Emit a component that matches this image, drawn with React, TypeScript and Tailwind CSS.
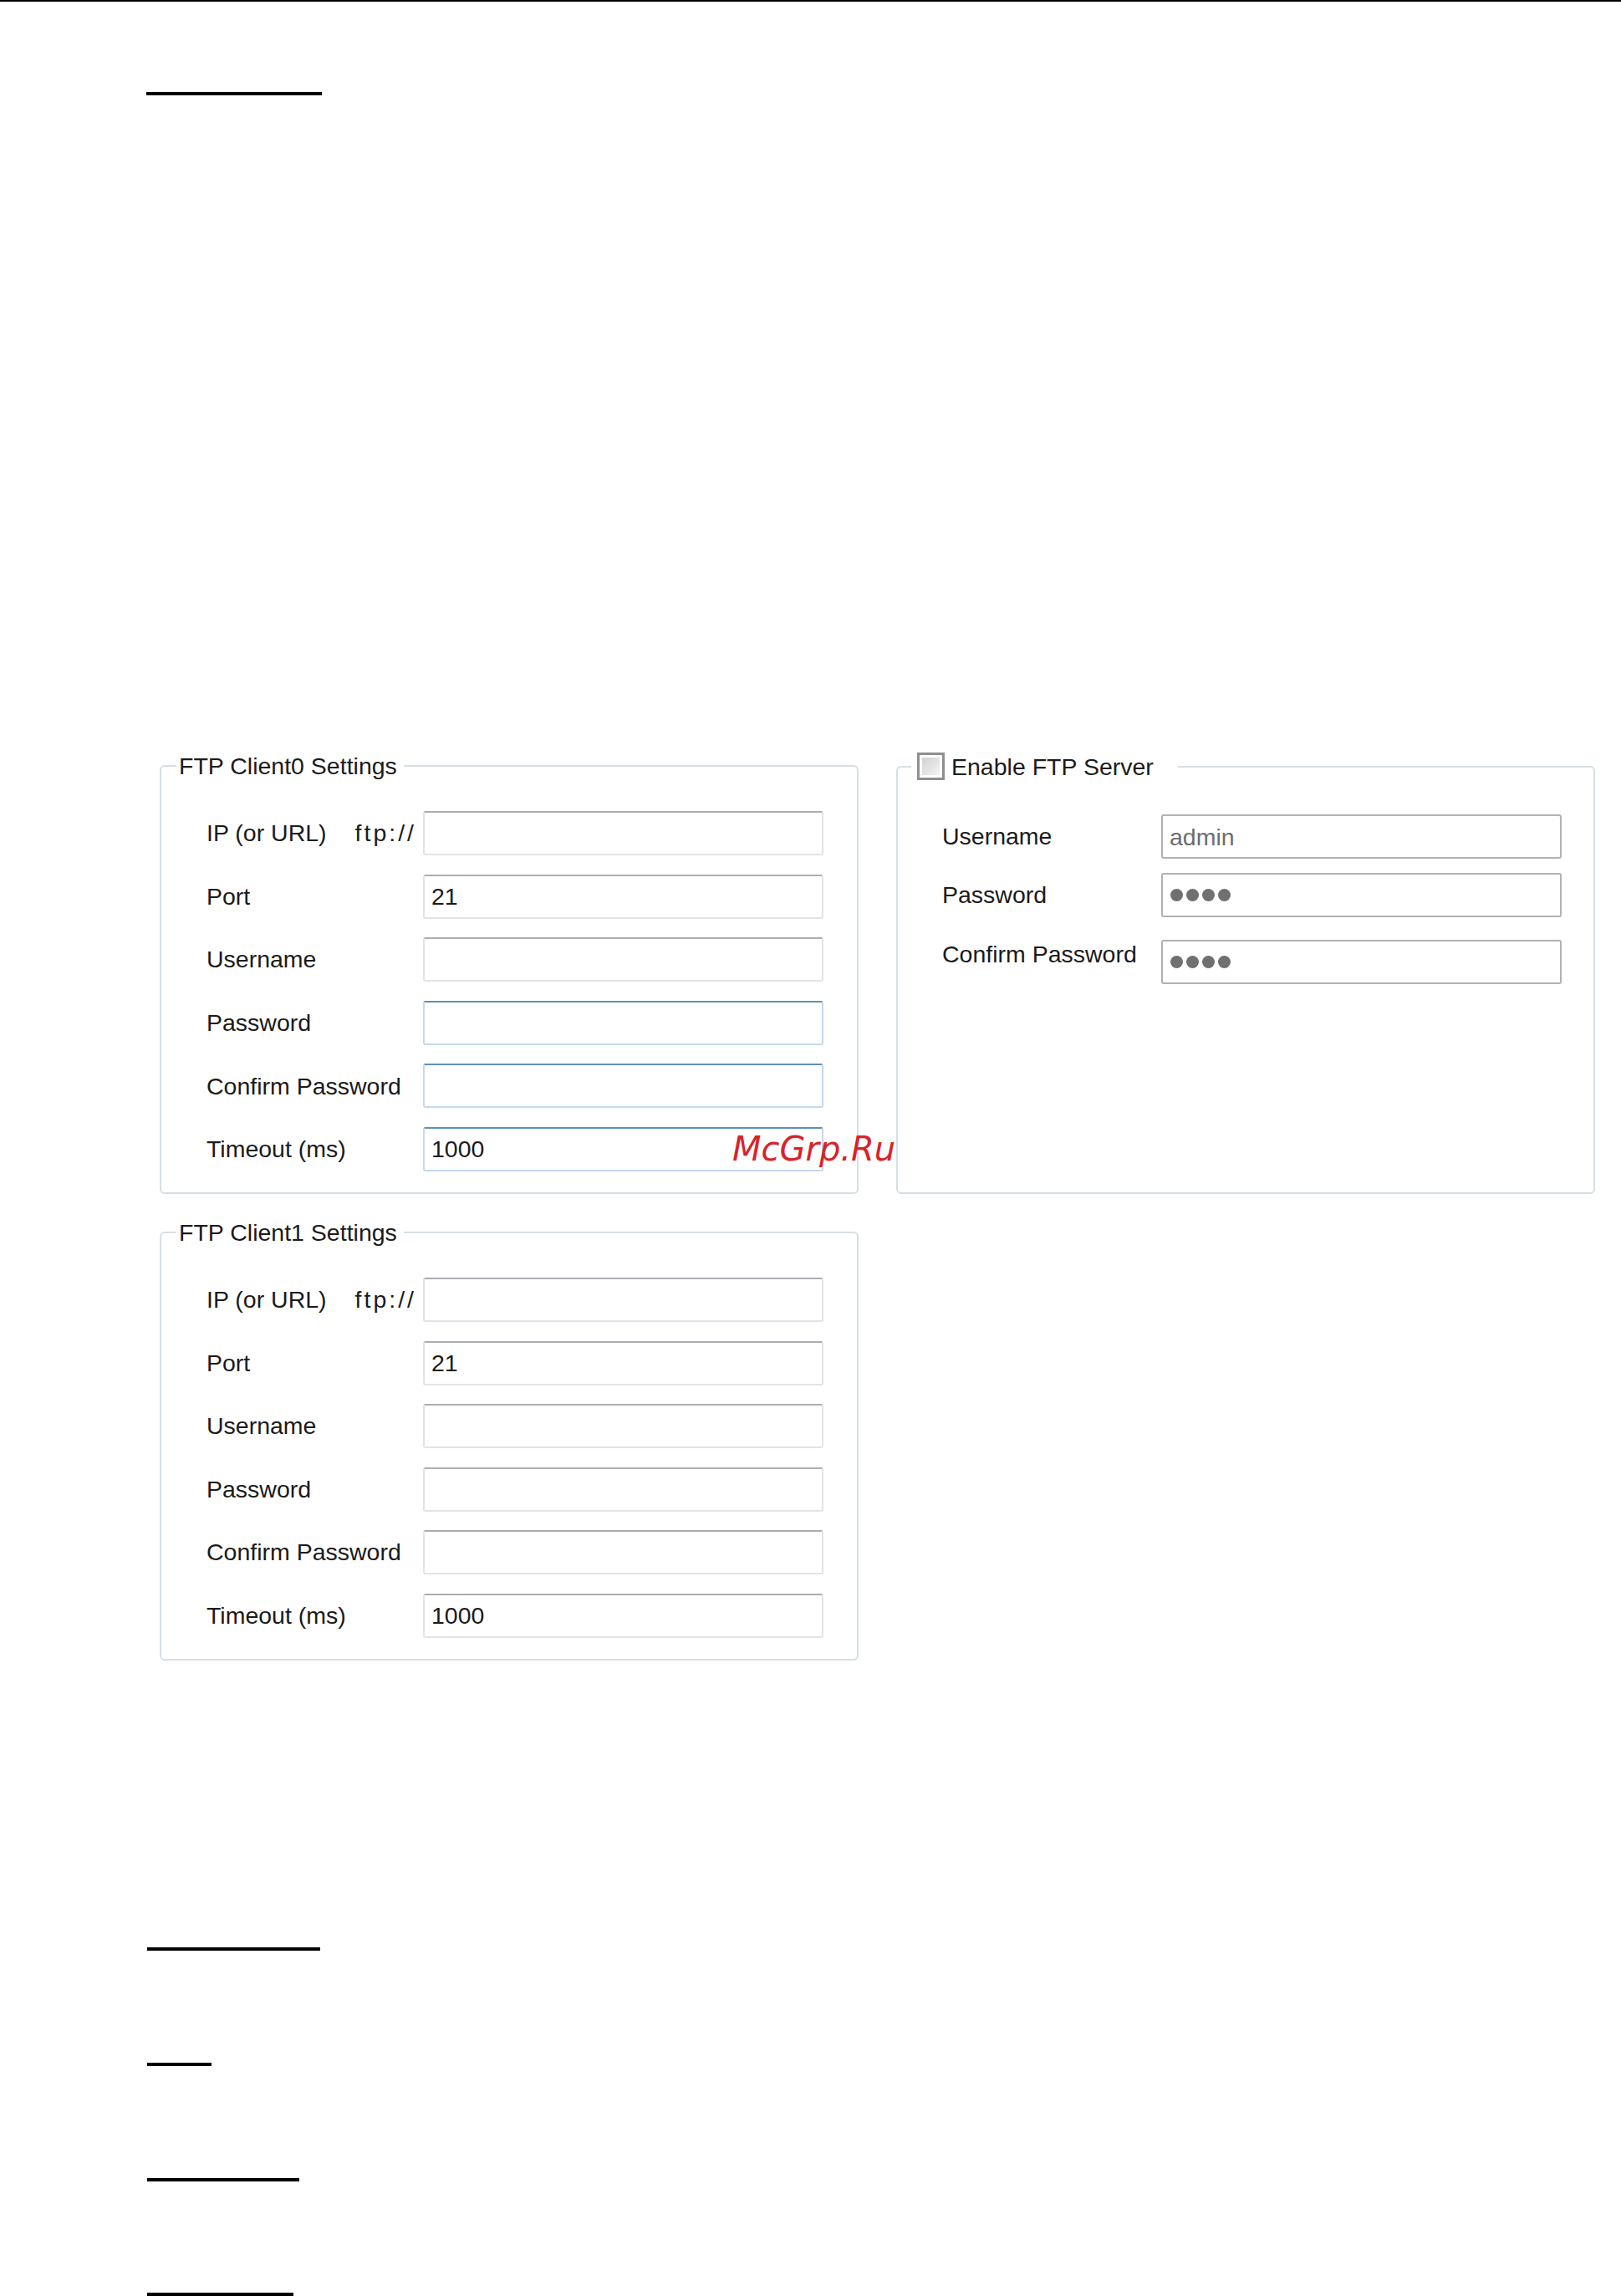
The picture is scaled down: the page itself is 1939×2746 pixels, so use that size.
const FONT = "font-['Liberation_Sans',Arial,sans-serif]";

type FieldKind = "normal" | "focus" | "disabled";

const BORDERS: Record<FieldKind, string> = {
  normal: "border-[#e2e3ea] border-t-[#abadb3]",
  focus: "border-[#c3d9ee] border-t-[#5b8fc0]",
  disabled: "border-[#b1b1b1]",
};

function Field({ value, kind = "normal", dots = 0 }: { value?: string; kind?: FieldKind; dots?: number }) {
  return (
    <div
      className={`flex h-[53px] w-[479px] items-center rounded-[3px] border-2 pl-[8px] text-[28.5px] leading-[32px] ${BORDERS[kind]} ${
        kind === "disabled" ? "text-[#6d6d6d]" : "text-[#1b1b1b]"
      }`}
    >
      {value}
      {dots > 0 && (
        <span className="flex gap-[4px] pl-[1px]">
          {Array.from({ length: dots }).map((_, i) => (
            <span key={i} className="h-[15px] w-[15px] rounded-full bg-[#707070]" />
          ))}
        </span>
      )}
    </div>
  );
}

const CLIENT_ROWS = [
  { label: "Port", value: "21" },
  { label: "Username" },
  { label: "Password" },
  { label: "Confirm Password" },
  { label: "Timeout (ms)", value: "1000" },
];

function ClientBox({ title, focused }: { title: string; focused: boolean }) {
  return (
    <fieldset className="rounded-[6px] border-2 border-[#d5dfe5] pt-[38px] pb-[25px]">
      <legend className="ml-[18px] pl-[3px] pr-[8px] text-[28.5px] leading-[32px] text-[#1b1b1b]">{title}</legend>
      <div className="grid grid-cols-[259px_479px] gap-y-[22.6px] pl-[54px] text-[28.5px] text-[#1b1b1b]">
        <div className="flex items-center justify-between pr-[8px]">
          <span>IP (or URL)</span>
          <span className="tracking-[3px]">ftp://</span>
        </div>
        <Field />
        {CLIENT_ROWS.map((row, i) => (
          <div key={row.label} className="contents">
            <div className="flex items-center">{row.label}</div>
            <Field value={row.value} kind={focused && i >= 2 ? "focus" : "normal"} />
          </div>
        ))}
      </div>
    </fieldset>
  );
}

function ServerBox() {
  return (
    <fieldset className="rounded-[6px] border-2 border-[#d5dfe5] pt-[41px] pb-[25px]">
      <legend className="ml-[16px] flex items-center gap-[8px] pl-[7px] pr-[29px] text-[28.5px] leading-[32px] text-[#1b1b1b]">
        <span className="flex h-[33px] w-[33px] items-center justify-center border-[3px] border-[#8f8f8f]">
          <span className="h-[25px] w-[25px] border-2 border-white bg-gradient-to-br from-[#d2d2d2] to-[#f3f3f3]" />
        </span>
        Enable FTP Server
      </legend>
      <div className="flex flex-col pl-[53px] text-[28.5px] text-[#1b1b1b]">
        <div className="flex h-[53px] items-center">
          <span className="w-[262px]">Username</span>
          <Field value="admin" kind="disabled" />
        </div>
        <div className="mt-[17px] flex h-[53px] items-center">
          <span className="w-[262px]">Password</span>
          <Field kind="disabled" dots={4} />
        </div>
        <div className="mt-[27px] flex h-[53px] items-start">
          <span className="w-[262px] pt-[1px] leading-[32px]">Confirm Password</span>
          <Field kind="disabled" dots={4} />
        </div>
      </div>
    </fieldset>
  );
}

export default function App() {
  return (
    <div className={`relative h-[2746px] w-[1939px] overflow-hidden bg-white ${FONT}`}>
      <div className="h-[2px] bg-black" />
      <div className="mt-[108px] ml-[175px] h-[4px] w-[210px] bg-black" />

      <div className="mt-[786px] ml-[191px] grid grid-cols-[836px_836px] gap-x-[45px] gap-y-[30px]">
        <ClientBox title="FTP Client0 Settings" focused />
        <ServerBox />
        <ClientBox title="FTP Client1 Settings" focused={false} />
      </div>

      <div className="mt-[343px] ml-[176px] h-[4px] w-[207px] bg-black" />
      <div className="mt-[134px] ml-[176px] h-[4px] w-[77px] bg-black" />
      <div className="mt-[134px] ml-[176px] h-[4px] w-[182px] bg-black" />
      <div className="mt-[133px] ml-[176px] h-[4px] w-[175px] bg-black" />

      <div className="absolute left-[876px] top-[1354px] font-['DejaVu_Sans',sans-serif] text-[40px] italic leading-none text-[#d8232a]">
        McGrp.Ru
      </div>
    </div>
  );
}
